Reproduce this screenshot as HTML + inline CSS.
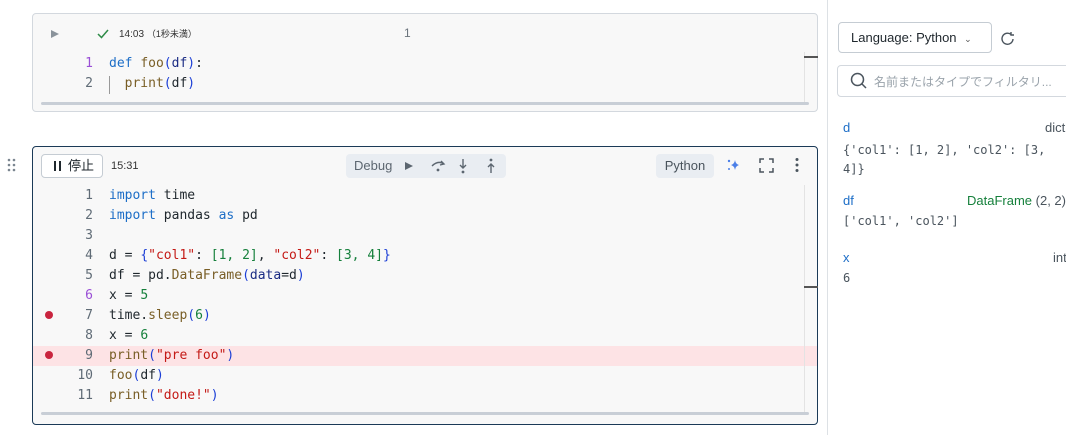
<!DOCTYPE html>
<html><head><meta charset="utf-8"><style>
*{box-sizing:border-box;margin:0;padding:0}
body{width:1066px;height:435px;background:#fff;font-family:"Liberation Sans","Noto Sans CJK JP",sans-serif;position:relative;overflow:hidden;color:#1f272d}
.cell{position:absolute;left:32px;width:786px;background:#f8f8f8;border-radius:4px}
.mono{font-family:"DejaVu Sans Mono","Liberation Mono",monospace;font-size:13px}
.ln{position:absolute;width:60px;text-align:right;color:#5f6b76}
.code{position:absolute;left:76px;white-space:pre;color:#1f272d}
.kw{color:#1d6ec7}.fn{color:#795e26}.p{color:#1c3fd6}.s{color:#c41a16}.n{color:#16803c}.v{color:#1b2c84}
.row{position:absolute;left:0;height:20px;line-height:20px;width:786px}
.abs{position:absolute}
</style></head><body>
<!-- cell 1 -->
<div class="cell" style="top:13px;height:99px;border:1px solid #d3d8de">
  <svg class="abs" style="left:17px;top:15px" width="10" height="10"><path d="M1 1 L9 5 L1 9Z" fill="#8a939b"/></svg>
  <svg class="abs" style="left:64px;top:14px" width="12" height="12"><path d="M1 6 L4.5 9.5 L11 2" stroke="#2e8b47" stroke-width="1.5" fill="none"/></svg>
  <div class="abs" style="left:86px;top:13px;font-size:10px;color:#333;white-space:nowrap">14:03 <span style="font-size:9px">（1秒未満）</span></div>
  <div class="abs" style="left:371px;top:12px;font-size:12px;color:#6b747c">1</div>
  <div class="mono">
    <div class="row" style="top:40px"><span class="ln" style="color:#9a4fd6">1</span><span class="code"><span class="kw">def</span> <span class="fn">foo</span><span class="p">(</span><span class="v">df</span><span class="p">)</span>:</span></div>
    <div class="row" style="top:60px"><span class="ln">2</span><span class="code">  <span class="fn">print</span><span class="p">(</span>df<span class="p">)</span></span></div>
  </div>
  <div class="abs" style="left:76px;top:62px;width:1px;height:18px;background:#999"></div>
  <div class="abs" style="left:771px;top:38px;width:1px;height:50px;background:#e3e3e3"></div>
  <div class="abs" style="left:8px;top:88px;width:768px;height:3px;background:#c8ced6;border-radius:2px"></div>
  <div class="abs" style="left:771px;top:42px;width:14px;height:2px;background:#555"></div>
</div>
<!-- drag handle -->
<svg class="abs" style="left:7px;top:158px" width="12" height="16"><g fill="#7a858f"><circle cx="2" cy="2" r="1.3"/><circle cx="7" cy="2" r="1.3"/><circle cx="2" cy="7" r="1.3"/><circle cx="7" cy="7" r="1.3"/><circle cx="2" cy="12" r="1.3"/><circle cx="7" cy="12" r="1.3"/></g></svg>
<!-- cell 2 -->
<div class="cell" style="top:146px;height:279px;border:1px solid #1b3a57">
  <div class="abs" style="left:8px;top:7px;width:62px;height:24px;border:1px solid #c5ccd3;border-radius:4px;background:#fff;font-size:13px;line-height:22px;white-space:nowrap">
    <span class="abs" style="left:12px;top:6px;width:2px;height:10px;background:#1f272d"></span>
    <span class="abs" style="left:17px;top:6px;width:2px;height:10px;background:#1f272d"></span>
    <span class="abs" style="left:26px;top:0">停止</span>
  </div>
  <div class="abs" style="left:78px;top:13px;font-size:11px;color:#333">15:31</div>
  <div class="abs" style="left:313px;top:7px;width:160px;height:24px;background:#e9edf2;border-radius:4px">
    <span class="abs" style="left:8px;top:4px;font-size:13px;color:#5c6670">Debug</span>
    <svg class="abs" style="left:58px;top:7px" width="10" height="10"><path d="M1 1L9 5L1 9Z" fill="#5c6670"/></svg>
    <svg class="abs" style="left:84px;top:5px" width="16" height="14"><path d="M2 7 Q8 1 14 5 M11 2 L14 5 L10 6" stroke="#5c6670" stroke-width="1.4" fill="none"/><circle cx="8" cy="11" r="1.4" fill="#5c6670"/></svg>
    <svg class="abs" style="left:112px;top:4px" width="10" height="16"><path d="M5 1V10 M2 7L5 10L8 7" stroke="#5c6670" stroke-width="1.4" fill="none"/><circle cx="5" cy="14" r="1.4" fill="#5c6670"/></svg>
    <svg class="abs" style="left:140px;top:4px" width="10" height="16"><path d="M5 15V6 M2 9L5 6L8 9" stroke="#5c6670" stroke-width="1.4" fill="none"/><circle cx="5" cy="2" r="1.4" fill="#5c6670"/></svg>
  </div>
  <div class="abs" style="left:623px;top:7px;width:58px;height:24px;background:#e9edf2;border-radius:4px;font-size:13px;color:#4a545d;text-align:center;line-height:24px">Python</div>
  <svg class="abs" style="left:693px;top:11px" width="14" height="14"><path d="M9 2 Q9.6 6 13 7 Q9.6 8 9 12 Q8.4 8 5 7 Q8.4 6 9 2Z" fill="#4b7fe8"/><circle cx="3" cy="3" r="1.2" fill="#4b7fe8"/><circle cx="3" cy="11" r="1" fill="#4b7fe8"/></svg>
  <svg class="abs" style="left:726px;top:11px" width="15" height="15"><path d="M1 5V1H5 M10 1H14V5 M14 10V14H10 M5 14H1V10" stroke="#4a545d" stroke-width="1.5" fill="none"/></svg>
  <svg class="abs" style="left:762px;top:10px" width="4" height="16"><g fill="#4a545d"><circle cx="2" cy="2.5" r="1.5"/><circle cx="2" cy="8" r="1.5"/><circle cx="2" cy="13.5" r="1.5"/></g></svg>
  <div class="abs" style="left:0;top:199px;width:784px;height:20px;background:#fde3e5"></div>
  <div class="abs" style="left:771px;top:38px;width:1px;height:228px;background:#e3e3e3"></div>
  <div class="abs" style="left:771px;top:139px;width:14px;height:2px;background:#555"></div>
  <div class="mono">
    <div class="row" style="top:39px"><span class="ln">1</span><span class="code"><span class="kw">import</span> time</span></div>
    <div class="row" style="top:59px"><span class="ln">2</span><span class="code"><span class="kw">import</span> pandas <span class="kw">as</span> pd</span></div>
    <div class="row" style="top:79px"><span class="ln">3</span></div>
    <div class="row" style="top:99px"><span class="ln">4</span><span class="code">d = <span class="p">{</span><span class="s">"col1"</span>: <span class="n">[1, 2]</span>, <span class="s">"col2"</span>: <span class="n">[3, 4]</span><span class="p">}</span></span></div>
    <div class="row" style="top:119px"><span class="ln">5</span><span class="code">df = pd.<span class="fn">DataFrame</span><span class="p">(</span><span class="v">data</span>=d<span class="p">)</span></span></div>
    <div class="row" style="top:139px"><span class="ln" style="color:#9a4fd6">6</span><span class="code">x = <span class="n">5</span></span></div>
    <div class="row" style="top:159px"><span class="ln">7</span><span class="code">time.<span class="fn">sleep</span><span class="p">(</span><span class="n">6</span><span class="p">)</span></span></div>
    <div class="row" style="top:179px"><span class="ln">8</span><span class="code">x = <span class="n">6</span></span></div>
    <div class="row" style="top:199px"><span class="ln">9</span><span class="code"><span class="fn">print</span><span class="p">(</span><span class="s">"pre foo"</span><span class="p">)</span></span></div>
    <div class="row" style="top:219px"><span class="ln">10</span><span class="code"><span class="fn">foo</span><span class="p">(</span>df<span class="p">)</span></span></div>
    <div class="row" style="top:239px"><span class="ln">11</span><span class="code"><span class="fn">print</span><span class="p">(</span><span class="s">"done!"</span><span class="p">)</span></span></div>
  </div>
  <div class="abs" style="left:12px;top:164px;width:8px;height:8px;border-radius:50%;background:#c9253f"></div>
  <div class="abs" style="left:12px;top:204px;width:8px;height:8px;border-radius:50%;background:#c9253f"></div>
  <div class="abs" style="left:8px;top:265px;width:768px;height:3px;background:#c8ced6;border-radius:2px"></div>
</div>
<!-- right panel -->
<div class="abs" style="left:827px;top:0;width:1px;height:435px;background:#dde1e5"></div>
<div class="abs" style="left:838px;top:22px;width:154px;height:31px;border:1px solid #c5ccd3;border-radius:4px;font-size:13px;line-height:29px;padding-left:12px;color:#1f272d;white-space:nowrap">Language: Python <span style="font-size:9px;color:#555;margin-left:4px">⌄</span></div>
<svg class="abs" style="left:1000px;top:31px" width="16" height="16"><path d="M13 8 A5.5 5.5 0 1 1 11 3.5 M11 1V4H14" stroke="#4a545d" stroke-width="1.4" fill="none"/></svg>
<div class="abs" style="left:837px;top:65px;width:240px;height:32px;border:1px solid #d3d8de;border-radius:4px"></div>
<svg class="abs" style="left:850px;top:72px" width="18" height="18"><circle cx="7.5" cy="7.5" r="6" stroke="#4a545d" stroke-width="1.5" fill="none"/><path d="M12 12L16 16" stroke="#4a545d" stroke-width="1.5"/></svg>
<div class="abs" style="left:874px;top:73px;font-size:12px;color:#9aa3ab;white-space:nowrap">名前またはタイプでフィルタリ...</div>
<div class="abs" style="left:843px;top:120px;font-size:13px;color:#1d6ec7">d</div>
<div class="abs" style="left:1045px;top:120px;font-size:13px;color:#4a545d">dict</div>
<div class="abs mono" style="left:843px;top:141px;font-size:12px;line-height:19px;color:#4a545d;white-space:pre">{'col1': [1, 2], 'col2': [3,
4]}</div>
<div class="abs" style="left:843px;top:193px;font-size:13px;color:#1d6ec7">df</div>
<div class="abs" style="left:967px;top:193px;font-size:13px;color:#16803c;white-space:nowrap">DataFrame <span style="color:#4a545d">(2, 2)</span></div>
<div class="abs mono" style="left:843px;top:214px;font-size:12px;color:#4a545d">['col1', 'col2']</div>
<div class="abs" style="left:843px;top:250px;font-size:13px;color:#1d6ec7">x</div>
<div class="abs" style="left:1053px;top:250px;font-size:13px;color:#4a545d">int</div>
<div class="abs mono" style="left:843px;top:271px;font-size:12px;color:#4a545d">6</div>
</body></html>
